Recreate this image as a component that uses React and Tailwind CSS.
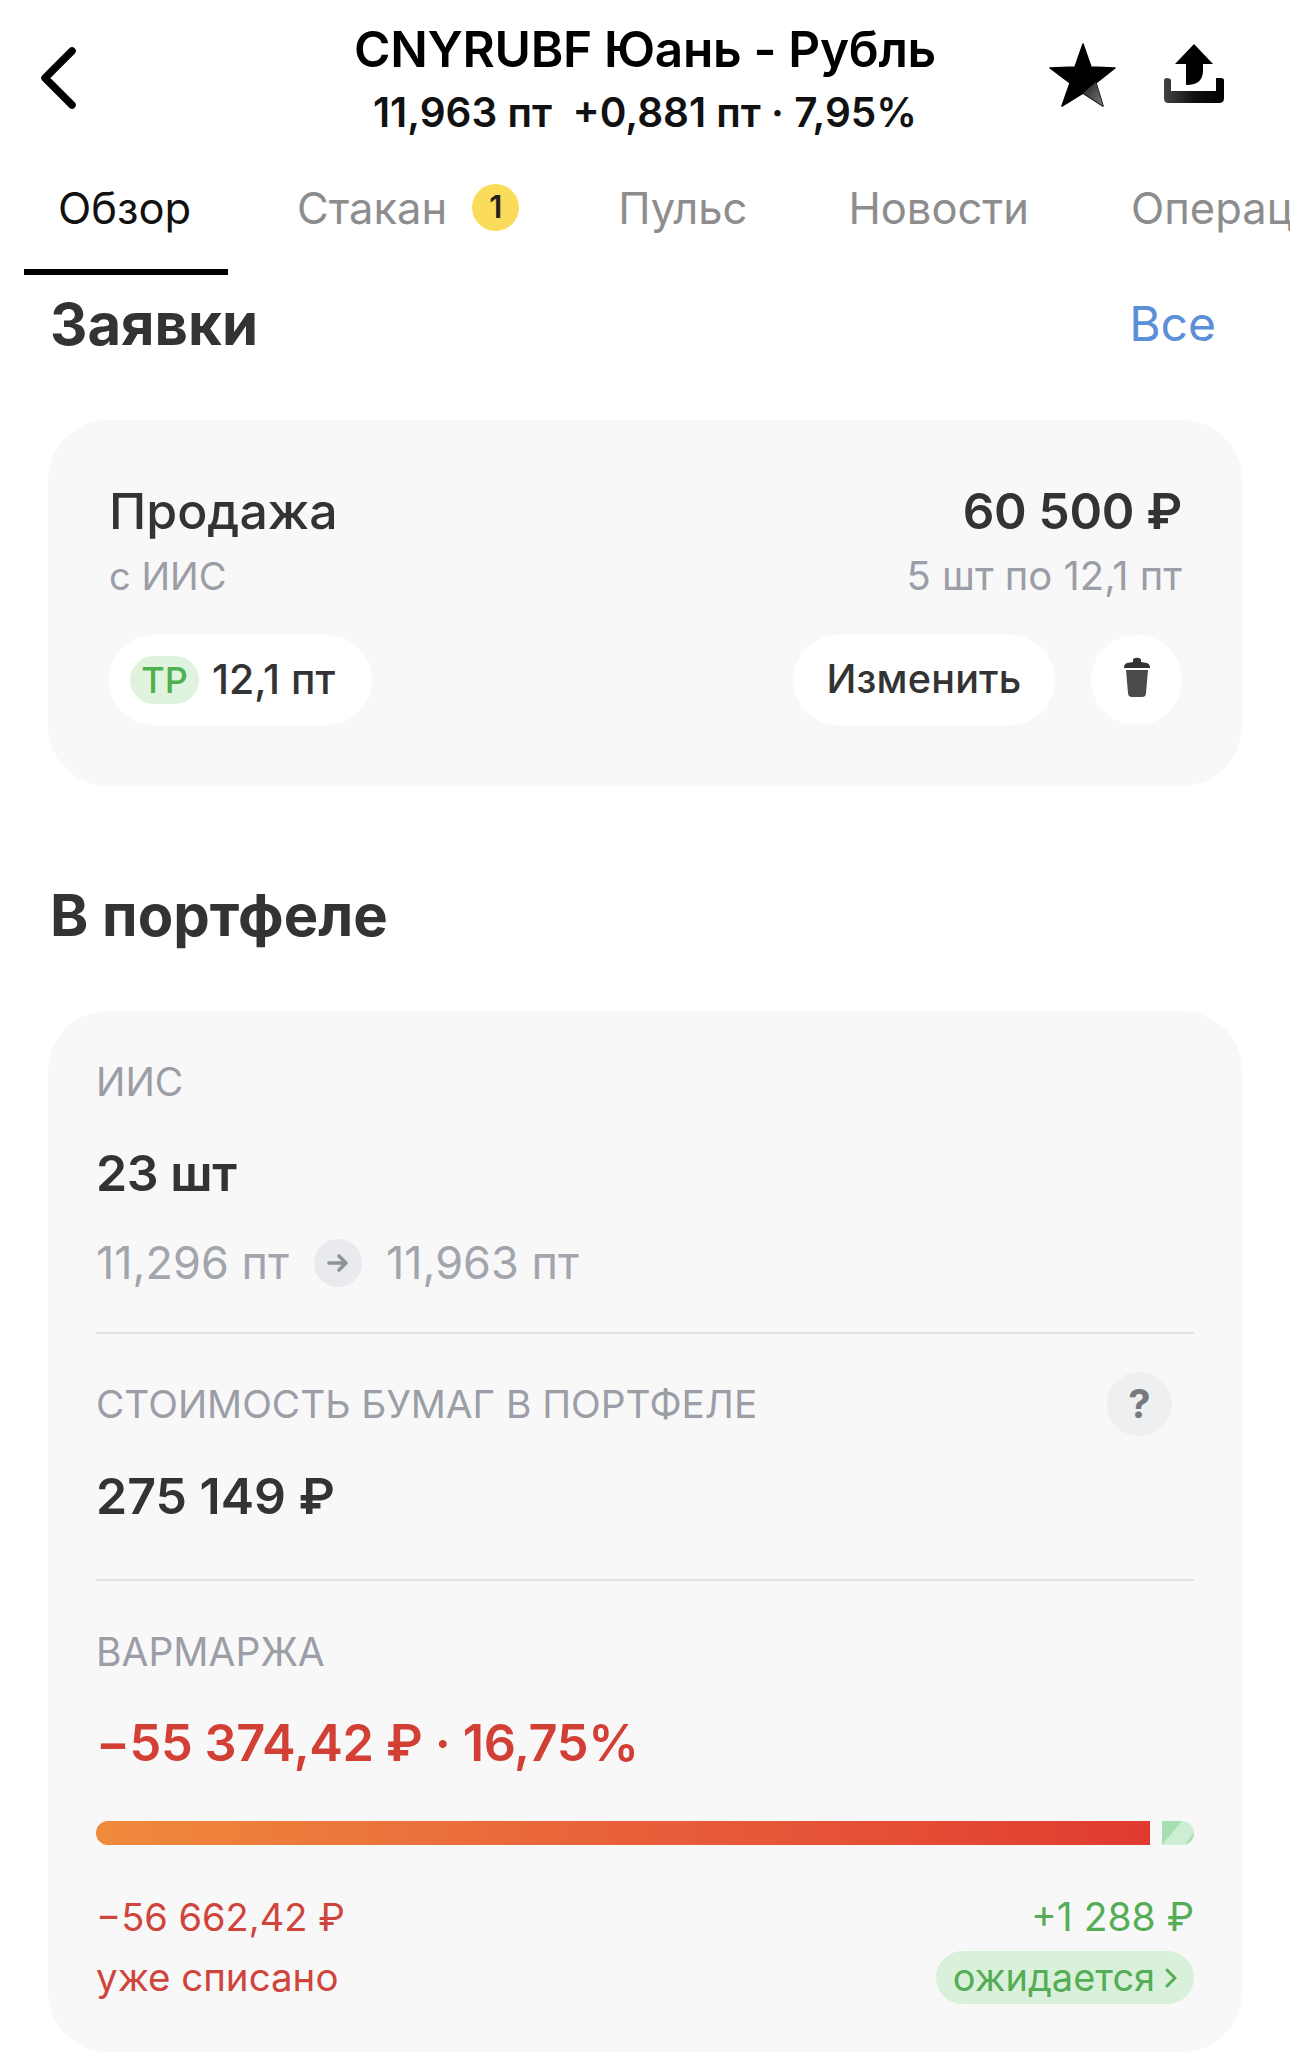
import React from "react";

const Chevron = () => (
  <svg width="40" height="62" viewBox="0 0 40 62" fill="none">
    <path d="M34 4 L7 31 L34 58" stroke="#000" strokeWidth="7.5" strokeLinecap="round" strokeLinejoin="round" />
  </svg>
);

const Star = () => (
  <svg width="68" height="66" viewBox="0 0 68 66">
    <defs>
      <linearGradient id="st" x1="0" y1="0" x2="1" y2="1">
        <stop offset="0" stopColor="#222" />
        <stop offset="1" stopColor="#777" />
      </linearGradient>
    </defs>
    <path d="M34 1 L42 24 L66 25 L47 40 L54 63 L34 50 L13 63 L21 40 L1 25 L26 24 Z" fill="#000" stroke="#000" strokeWidth="1.5" strokeLinejoin="round" />
    <path d="M34 50 L47 39 L54 63 Z" fill="url(#st)" />
  </svg>
);

const Share = () => (
  <svg width="62" height="62" viewBox="0 0 62 62">
    <defs>
      <linearGradient id="sh" x1="0" y1="0" x2="1" y2="0">
        <stop offset="0" stopColor="#444" />
        <stop offset="0.5" stopColor="#111" />
        <stop offset="1" stopColor="#000" />
      </linearGradient>
    </defs>
    <path d="M31 1 L50 21 L40 21 L40 27 C40 36 36 42 23 42 L23 21 L12 21 Z" fill="#000" />
    <path d="M1 37 L1 55 C1 59 3 60 6 60 L55 60 C59 60 61 59 61 55 L61 37 C61 36 60 35 58 35 L53 35 L53 48 L8 48 L8 37 C8 36 6 35 4 35 C2 35 1 36 1 37 Z" fill="url(#sh)" />
  </svg>
);

const Trash = () => (
  <svg width="26" height="40" viewBox="0 0 26 40" className="-mt-[6px]">
    <path d="M9 3 C9 0 17 0 17 3 L17 5 L23 6 C25 7 26 8 26 11 L0 11 C0 8 1 7 3 6 L9 5 Z" fill="#333" />
    <path d="M2 13 L24 13 L22 36 C22 39 20 40 18 40 L8 40 C6 40 4 39 4 36 Z" fill="#4a4a4a" />
  </svg>
);

const Arrow = () => (
  <svg width="22" height="20" viewBox="0 0 22 20" fill="none">
    <path d="M2 10 L19 10 M12 3 L19 10 L12 17" stroke="#8e929b" strokeWidth="3.5" strokeLinecap="round" strokeLinejoin="round" />
  </svg>
);

const Tab = ({ children, active, className }) => (
  <div className={`shrink-0 text-[43.5px] leading-[52px] whitespace-nowrap ${active ? "text-[#111]" : "text-[#8d8d8d]"} ${className || ""}`}>
    {children}
  </div>
);

export default function App() {
  return (
    <div className="w-[1290px] h-[2072px] bg-white overflow-hidden" style={{ fontFamily: "Inter, 'Noto Sans', sans-serif" }}>
      {/* header */}
      <div className="grid grid-cols-[1fr_auto_1fr] h-[146px] px-[38px] pt-[16px]">
        <div className="pt-[31px]">
          <Chevron />
        </div>
        <div className="flex flex-col items-center">
          <div className="text-[49.5px] leading-[66px] font-semibold text-black tracking-[-0.3px] whitespace-nowrap">CNYRUBF Юань - Рубль</div>
          <div className="text-[40.5px] leading-[62px] font-semibold text-[#111] whitespace-nowrap">11,963 пт&nbsp;&nbsp;+0,881 пт · 7,95%</div>
        </div>
        <div className="flex justify-end items-start gap-[46px] pt-[27px] pr-[27px]">
          <Star />
          <Share />
        </div>
      </div>

      {/* tabs */}
      <div className="h-[129px] overflow-hidden flex flex-col">
        <div className="flex items-center h-[123px] pl-[58px]">
          <Tab active className="w-[239px]">Обзор</Tab>
          <Tab>Стакан</Tab>
          <div className="ml-[25px] w-[47px] h-[47px] shrink-0 rounded-full bg-[#fbdc5a] flex items-center justify-center text-[31px] font-semibold text-[#222]">1</div>
          <Tab className="ml-[99px]">Пульс</Tab>
          <Tab className="ml-[101px]">Новости</Tab>
          <Tab className="ml-[102px]">Операции</Tab>
        </div>
        <div className="ml-[24px] w-[204px] h-[6px] bg-black" />
      </div>

      {/* orders title */}
      <div className="flex justify-between items-center h-[70px] mx-[50px] pr-[24px] mt-[14px]">
        <div className="text-[58px] leading-[70px] font-bold text-[#333]">Заявки</div>
        <div className="text-[48px] leading-[70px] text-[#5b8fd8]">Все</div>
      </div>

      {/* order card */}
      <div className="mx-[48px] mt-[61px] h-[366px] rounded-[60px] bg-[#f8f8f9] pl-[61px] pr-[60px] pt-[60px]">
        <div className="flex justify-between items-center h-[62px]">
          <div className="text-[50px] leading-[62px] font-medium text-[#333]">Продажа</div>
          <div className="text-[49.5px] leading-[62px] font-semibold text-[#333] tracking-[-0.3px]">60 500 ₽</div>
        </div>
        <div className="flex justify-between items-center h-[62px] mt-[3px]">
          <div className="text-[38px] leading-[62px] text-[#9b9ea6]">с ИИС</div>
          <div className="text-[40px] leading-[62px] text-[#9b9ea6]">5 шт по 12,1 пт</div>
        </div>
        <div className="flex items-center mt-[28px]">
          <div className="flex items-center w-[263px] h-[90px] rounded-full bg-white pl-[21px]">
            <div className="w-[69px] h-[48px] rounded-full bg-[#dff3df] flex items-center justify-center text-[36px] font-medium text-[#4fb04f]">ТР</div>
            <div className="ml-[13px] text-[41px] font-medium text-[#333] whitespace-nowrap">12,1 пт</div>
          </div>
          <div className="ml-auto w-[262px] h-[90px] rounded-full bg-white flex items-center justify-center text-[39.5px] font-medium text-[#333] tracking-[0.2px]">Изменить</div>
          <div className="ml-[36px] w-[91px] h-[90px] rounded-full bg-white flex items-center justify-center">
            <Trash />
          </div>
        </div>
      </div>

      {/* portfolio title */}
      <div className="mx-[50px] mt-[94px] text-[58px] leading-[70px] font-bold text-[#333]">В портфеле</div>

      {/* portfolio card */}
      <div className="mx-[48px] mt-[61px] h-[1041px] rounded-[60px] bg-[#f8f8f9] px-[48px] pt-[48px]">
        <div className="text-[39px] leading-[46px] text-[#9b9ea6]">ИИС</div>
        <div className="mt-[44px] text-[50px] leading-[48px] font-semibold text-[#333] tracking-[-0.4px]">23 шт</div>
        <div className="mt-[42px] flex items-center h-[48px] text-[45px] text-[#a2a5ac]">
          <span className="whitespace-nowrap">11,296 пт</span>
          <div className="ml-[25px] w-[48px] h-[48px] rounded-full bg-[#e9eaee] flex items-center justify-center">
            <Arrow />
          </div>
          <span className="ml-[24px] whitespace-nowrap">11,963 пт</span>
        </div>
        <div className="mt-[45px] h-[2px] bg-[#e2e3e6]" />

        <div className="mt-[38px] flex justify-between items-center h-[64px] pr-[22px]">
          <div className="text-[38.8px] text-[#9b9ea6] whitespace-nowrap">СТОИМОСТЬ БУМАГ В ПОРТФЕЛЕ</div>
          <div className="w-[65px] h-[64px] rounded-full bg-[#eeeff1] flex items-center justify-center text-[40px] font-bold text-[#77797f]">?</div>
        </div>
        <div className="mt-[35px] text-[50px] leading-[50px] font-semibold text-[#333]">275 149 ₽</div>
        <div className="mt-[58px] h-[2px] bg-[#e2e3e6]" />

        <div className="mt-[48px] text-[39px] leading-[46px] text-[#9b9ea6]">ВАРМАРЖА</div>
        <div className="mt-[43px] text-[50.5px] leading-[50px] font-semibold text-[#d23f35] tracking-[-0.4px] whitespace-nowrap">−55 374,42 ₽ · 16,75%</div>
        <div className="mt-[53px] flex h-[24px]">
          <div className="w-[1054px] rounded-l-full bg-gradient-to-r from-[#ef8a3c] via-[#e8603a] to-[#e03a30]" />
          <div className="ml-[12px] w-[32px] rounded-r-full bg-[#cdeed3] overflow-hidden">
            <svg width="32" height="24" viewBox="0 0 32 24" className="block">
              <path d="M0 0 L20 0 L0 24 Z" fill="#a6e0b0" />
              <path d="M32 11 L32 24 L23 24 Z" fill="#a6e0b0" />
            </svg>
          </div>
        </div>
        <div className="mt-[49px] flex justify-between items-center h-[46px]">
          <div className="text-[38px] text-[#cf453c] whitespace-nowrap">−56 662,42 ₽</div>
          <div className="text-[39px] text-[#55ad55] whitespace-nowrap">+1 288 ₽</div>
        </div>
        <div className="mt-[11px] flex justify-between items-center h-[53px]">
          <div className="text-[38.5px] text-[#cf453c] whitespace-nowrap">уже списано</div>
          <div className="w-[258px] h-[53px] rounded-full bg-[#d9f0da] flex items-center justify-center gap-[10px] text-[38px] text-[#55ad55]">
            <span>ожидается</span>
            <svg width="12" height="20" viewBox="0 0 12 20" fill="none">
              <path d="M2 2 L10 10 L2 18" stroke="#55ad55" strokeWidth="3" strokeLinecap="round" strokeLinejoin="round" />
            </svg>
          </div>
        </div>
      </div>
    </div>
  );
}
